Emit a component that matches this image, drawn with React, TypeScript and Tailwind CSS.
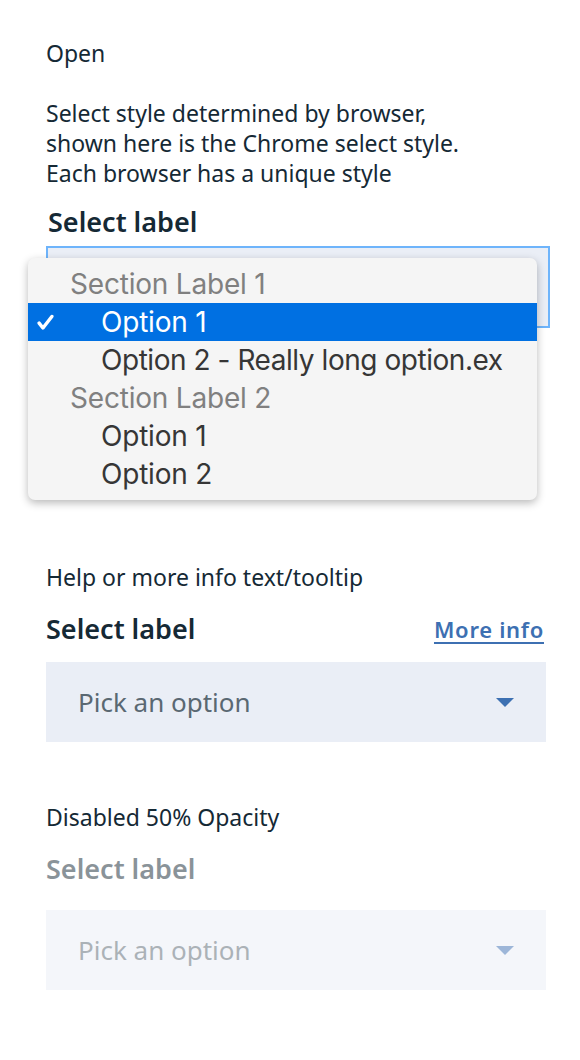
import React from "react";

const Arrow = ({ className }: { className?: string }) => (
  <svg width="18" height="9" viewBox="0 0 18 9" className={className}>
    <path d="M0 0h18L9 9z" fill="currentColor" />
  </svg>
);

const Check = () => (
  <svg width="17" height="17" viewBox="0 0 16 16">
    <path
      d="M2 8.6l3.6 4.6L14 2.3"
      fill="none"
      stroke="#fff"
      strokeWidth="3.2"
      strokeLinecap="round"
      strokeLinejoin="round"
    />
  </svg>
);

const NativeMenu = () => {
  const rows = [
    { text: "Section Label 1", type: "section" },
    { text: "Option 1", type: "selected" },
    { text: "Option 2 - Really long option.ex", type: "long" },
    { text: "Section Label 2", type: "section" },
    { text: "Option 1", type: "option" },
    { text: "Option 2", type: "option" },
  ];
  return (
    <div
      className="absolute left-[-18px] top-[12px] w-[509px] rounded-[7px] bg-[#f5f5f5] py-[7px] shadow-[0_3px_8px_rgba(0,0,0,0.28)]"
      style={{ fontFamily: "Inter, Roboto, sans-serif" }}
    >
      {rows.map((r, i) =>
        r.type === "section" ? (
          <div key={i} className="h-[38px] flex items-center pl-[42px] text-[28px] tracking-[-0.2px] text-[#808080]">
            {r.text}
          </div>
        ) : (
          <div
            key={i}
            className={`h-[38px] flex items-center text-[28px] whitespace-nowrap ${
              r.type === "selected" ? "bg-[#0070e2] text-white" : "text-[#363636]"
            } ${r.type === "long" ? "tracking-[-0.45px]" : "tracking-[-0.2px]"}`}
          >
            <span className="w-[73px] shrink-0 pl-[9px] flex items-center">
              {r.type === "selected" ? <Check /> : null}
            </span>
            <span>{r.text}</span>
          </div>
        )
      )}
    </div>
  );
};

const SelectBox = () => (
  <div className="h-[80px] w-[500px] bg-[#eaeef6] flex items-center justify-between pl-[32px] pr-[32px]">
    <span className="text-[26px] text-[#5a6872]">Pick an option</span>
    <Arrow className="text-[#3d70b2]" />
  </div>
);

export default function App() {
  return (
    <div
      className="min-h-[1060px] bg-white px-[46px] pt-[38px] text-[#152935]"
      style={{ fontFamily: "'Noto Sans', 'Open Sans', sans-serif" }}
    >
      <p className="text-[23px] leading-[30px]">Open</p>
      <p className="mt-[30px] text-[23px] leading-[30px]">
        Select style determined by browser,
        <br />
        shown here is the Chrome select style.
        <br />
        Each browser has a unique style
      </p>
      <p className="mt-[19px] text-[27px] leading-[30px] font-semibold pl-[2px]">Select label</p>
      <div className="relative mt-[9px]">
        <div className="h-[82px] w-[504px] border-2 border-[#6eb4fb] bg-[#eaeef6]" />
        <NativeMenu />
      </div>

      <p className="mt-[234px] text-[23px] leading-[30px]">Help or more info text/tooltip</p>
      <div className="mt-[22px] w-[498px] flex items-center justify-between h-[30px]">
        <span className="text-[27px] font-semibold">Select label</span>
        <a href="#" className="text-[22px] font-semibold text-[#3d70b2] underline underline-offset-[4px] tracking-[0.7px]">
          More info
        </a>
      </div>
      <div className="mt-[18px]">
        <SelectBox />
      </div>

      <p className="mt-[60px] text-[23px] leading-[30px]">Disabled 50% Opacity</p>
      <div className="opacity-50">
        <p className="mt-[22px] text-[27px] leading-[30px] font-semibold">Select label</p>
        <div className="mt-[26px]">
          <SelectBox />
        </div>
      </div>
    </div>
  );
}
